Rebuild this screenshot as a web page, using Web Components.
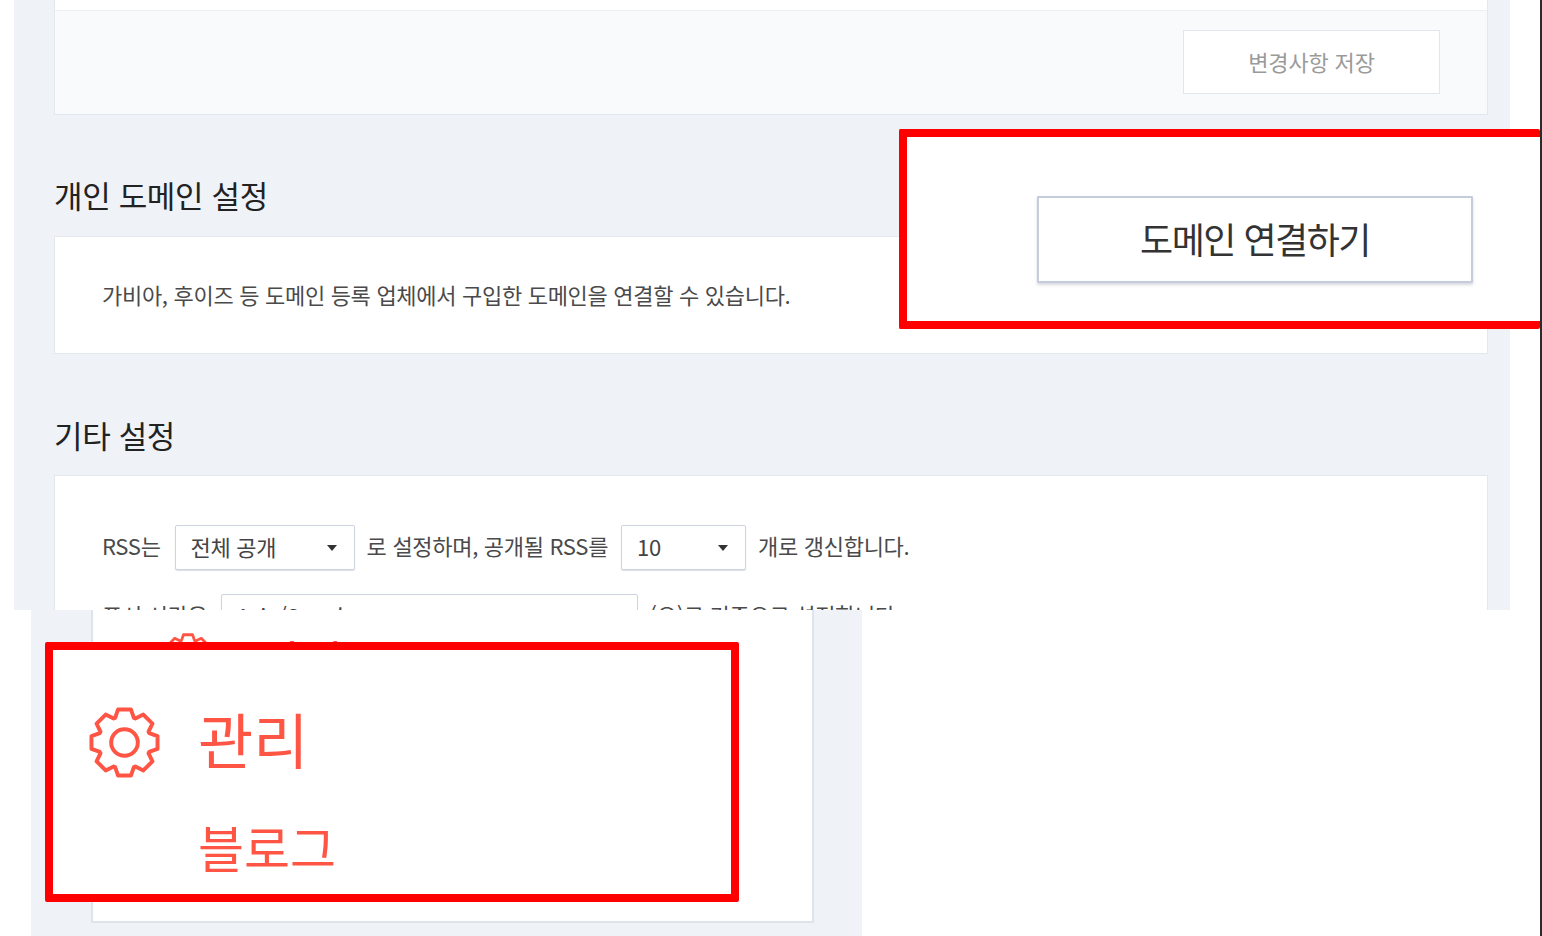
<!DOCTYPE html>
<html lang="ko">
<head>
<meta charset="utf-8">
<title>블로그 관리</title>
<style>
  html, body { margin: 0; background: #fff; }
  body { font-family: "Noto Sans CJK KR", "Noto Sans", sans-serif; overflow: hidden; }
  form-row > span { padding-bottom: 5px; }
</style>
</head>
<body>
<shot-canvas>
  <settings-panel>
    <settings-card flat>
      <card-footer><ghost-button>변경사항 저장</ghost-button></card-footer>
    </settings-card>
    <section-title>개인 도메인 설정</section-title>
    <settings-card pad="domain"><span>가비아, 후이즈 등 도메인 등록 업체에서 구입한 도메인을 연결할 수 있습니다.</span></settings-card>
    <section-title low>기타 설정</section-title>
    <settings-card pad="form">
      <form-row>
        <span>RSS는</span><select-box style="--w:180px;margin-left:2px">전체 공개</select-box>
        <span>로 설정하며, 공개될 RSS를</span><select-box style="--w:125px">10</select-box>
        <span>개로 갱신합니다.</span>
      </form-row>
      <form-row>
        <span>표시 시간은</span><select-box style="--w:417px">Asia/Seoul</select-box>
        <span>(으)로 기준으로 설정합니다.</span>
      </form-row>
    </settings-card>
  </settings-panel>

  <menu-panel>
    <menu-item size="small"><span>관리</span></menu-item>
  </menu-panel>

  <!-- the two red boxes pasted over the shot -->
  <red-callout open-right style="left:899px;top:129px;width:641px;height:200px">
    <connect-button>도메인 연결하기</connect-button>
  </red-callout>
  <red-callout style="left:45px;top:642px;width:694px;height:260px">
    <menu-item size="large"><span>관리</span><span slot="sub">블로그</span></menu-item>
  </red-callout>
</shot-canvas>

<script>
function makeEl(name, css, html) {
  customElements.define(name, class extends HTMLElement {
    constructor() {
      super();
      this.attachShadow({ mode: 'open' });
      this.shadowRoot.innerHTML = `<style>${css}</style>${html}`;
    }
  });
}

// 8 tooth gear outline, viewBox 0 0 72 72
function gearPath() {
  const pts = [[25, -9.5], [33.5, -6.5], [33.5, 6.5], [25, 9.5]];
  let d = '';
  for (let i = 0; i < 8; i++) {
    const a = i * Math.PI / 4;
    for (const [u, v] of pts) {
      const x = 36 + u * Math.cos(a) - v * Math.sin(a);
      const y = 36 + u * Math.sin(a) + v * Math.cos(a);
      d += (d ? 'L' : 'M') + x.toFixed(1) + ' ' + y.toFixed(1);
    }
  }
  return d + 'Z';
}

makeEl('shot-canvas', `
  :host { display: block; position: relative; width: 1540px; height: 936px; background: #fff;
          border-right: 2px solid #2b2b2b; overflow: hidden; color: #444; }
`, `<slot></slot>`);

makeEl('settings-panel', `
  :host { display: block; box-sizing: border-box; margin-left: 14px; width: 1496px; height: 610px;
          padding: 0 22px 0 40px; background: #eff2f6; overflow: hidden; }
`, `<slot></slot>`);

makeEl('settings-card', `
  :host { display: block; box-sizing: border-box; background: #fff; border: 1px solid #e3e7ee;
          font-size: 22px; letter-spacing: -0.3px; color: #4a4a4a; }
  :host([flat]) { border-top: 0; padding-top: 10px; }
  :host([pad="domain"]) { height: 118px; padding: 40px 47px 0; line-height: 34px; }
  :host([pad="form"]) { padding: 49px 47px 40px; }
`, `<slot></slot>`);

makeEl('card-footer', `
  :host { display: flex; justify-content: flex-end; box-sizing: border-box; height: 104px;
          padding: 19px 47px 0 0; background: #f9fafc; border-top: 1px solid #eef0f5; }
`, `<slot></slot>`);

makeEl('ghost-button', `
  :host { display: flex; align-items: center; justify-content: center; box-sizing: border-box;
          width: 257px; height: 64px; padding-bottom: 2px; background: #fff; border: 1px solid #e3e6ee;
          color: #9a9a9a; font-size: 22px; letter-spacing: -0.15px; }
`, `<slot></slot>`);

makeEl('section-title', `
  :host { display: block; padding: 59px 0 20px; font-size: 31px; line-height: 42px;
          letter-spacing: -0.35px; color: #222; }
  :host([low]) { padding: 60px 0 19px; }
`, `<slot></slot>`);

makeEl('form-row', `
  :host { display: flex; align-items: center; gap: 12px; height: 45px; margin-bottom: 24px; }
`, `<slot></slot>`);

makeEl('select-box', `
  :host { display: flex; align-items: center; justify-content: space-between; box-sizing: border-box;
          width: var(--w); height: 45px; margin-left: 1px; padding: 0 17px 0 15px; background: #fff;
          border: 1px solid #cdd3df; border-radius: 2px; box-shadow: 0 1px 1px rgba(120,130,150,.25); color: #444; }
  span { padding-bottom: 4px; }
  i { width: 0; height: 0; border: 5px solid transparent; border-top: 6px solid #333; border-bottom: 0; }
`, `<span><slot></slot></span><i></i>`);

makeEl('menu-panel', `
  :host { display: block; box-sizing: border-box; margin-left: 31px; width: 831px; height: 326px;
          padding-left: 60px; background: #eff2f6; overflow: hidden; }
  div { box-sizing: border-box; width: 723px; height: 323px; margin-top: -10px; padding: 33px 0 0 70px;
        background: #fff; border: 2px solid #dfe3eb; border-top: 0; }
`, `<div><slot></slot></div>`);

makeEl('menu-item', `
  :host { display: grid; grid-template-columns: var(--gear) auto; column-gap: var(--gap); justify-content: start;
          color: #ff5544; }
  :host([size="large"]) { --gear: 71px; --gap: 38px; font-size: 60px; line-height: 62px; filter: blur(.4px); }
  :host([size="small"]) { --gear: 50px; --gap: 47px; font-size: 45px; line-height: 53px; }
  svg { display: block; width: var(--gear); height: var(--gear); }
  ::slotted([slot="sub"]) { grid-column: 2; font-size: 50px; line-height: 60px; margin-top: 38px; }
`, `<svg viewBox="0 0 72 72" fill="none" stroke="#ff5544" stroke-width="4" stroke-linejoin="round">
      <path d="${gearPath()}"/><circle cx="36" cy="36" r="13.5"/>
    </svg><slot></slot><slot name="sub"></slot>`);

makeEl('red-callout', `
  :host { display: block; position: absolute; box-sizing: border-box; border: 8px solid #f00;
          border-radius: 2px; background: #fff; padding: 57px 0 0 36px; }
  :host([open-right]) { border-right: 0; padding: 59px 0 0 130px; }
`, `<slot></slot>`);

makeEl('connect-button', `
  :host { display: flex; align-items: center; justify-content: center; box-sizing: border-box;
          width: 436px; height: 87px; padding-bottom: 3px; background: #fff; border: 2px solid #c6cdda; border-radius: 1px;
          box-shadow: 0 2px 3px rgba(120,130,150,.3); color: #333; font-size: 36px; letter-spacing: -1.5px; }
`, `<slot></slot>`);
</script>
</body>
</html>
